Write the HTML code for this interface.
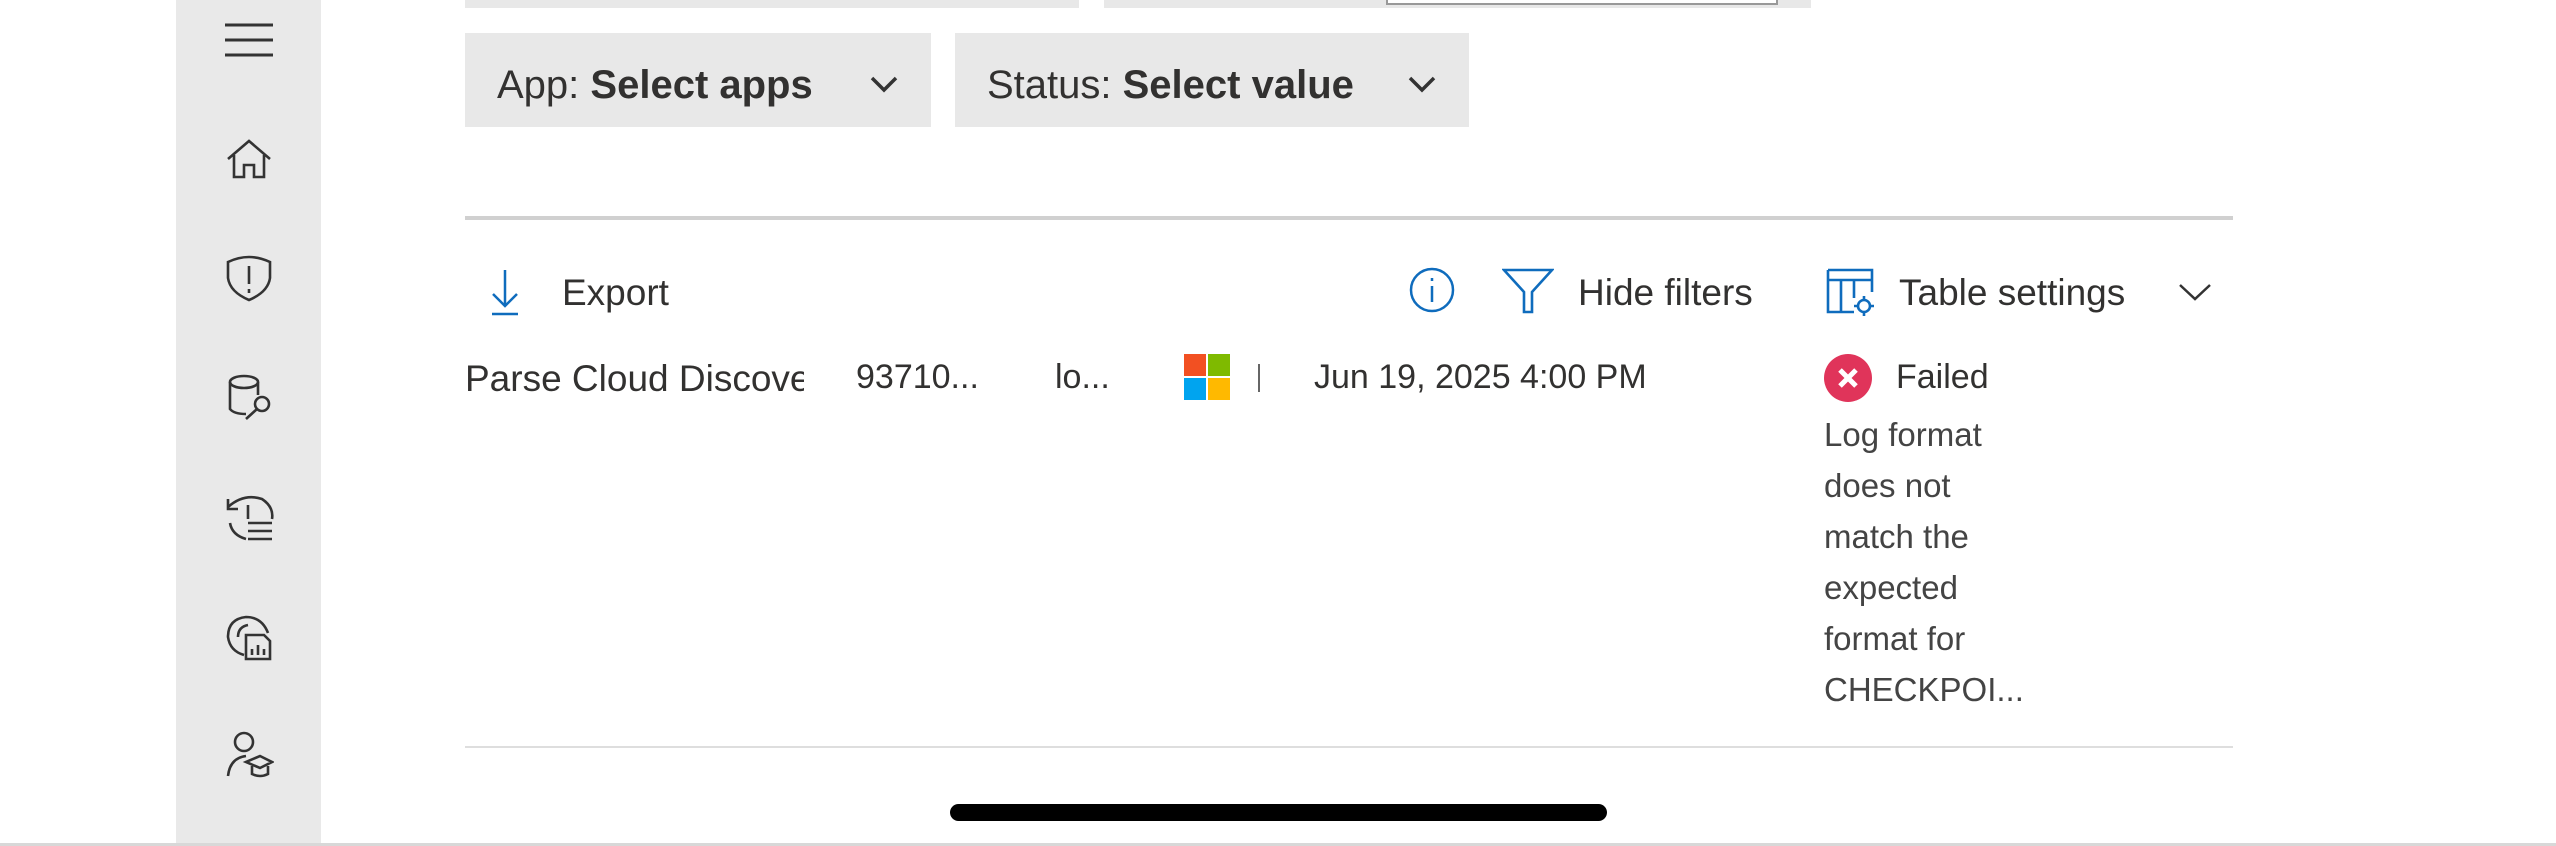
<!DOCTYPE html>
<html><head><meta charset="utf-8"><style>
*{margin:0;padding:0;box-sizing:border-box}
body{width:2556px;height:846px;background:#fff;position:relative;overflow:hidden;font-family:"Liberation Sans",sans-serif;color:#323130}
.a{position:absolute}
.side{left:176px;top:0;width:145px;height:846px;background:#e9e9e9}
.ic{position:absolute;left:224px;width:50px;height:50px}
.dd{background:#e8e8e8;top:33px;height:94px;font-size:40px;line-height:104px;padding-left:32px;white-space:nowrap}
.t{font-size:37px;white-space:nowrap}
.r{font-size:34px;white-space:nowrap}
.d{left:1824px;font-size:33px;color:#444}
</style></head><body>
<div class="a side"></div>
<svg class="ic" style="top:16px" viewBox="0 0 50 50" fill="none" stroke="#333" stroke-width="3"><path d="M1 9H49M1 24H49M1 39H49"/></svg>
<svg class="ic" style="top:133px" viewBox="0 0 50 50" fill="none" stroke="#333" stroke-width="2.6"><path d="M4 26L25 8L46 26M10 22V44H20V32H30V44H40V22"/></svg>
<svg class="ic" style="top:252px" viewBox="0 0 50 50" fill="none" stroke="#333" stroke-width="2.6"><path d="M4 10Q25 0 46 10V26Q44 40 25 48Q6 40 4 26Z"/><path d="M25 14V32M25 37V41"/></svg>
<svg class="ic" style="top:371px" viewBox="0 0 50 50" fill="none" stroke="#333" stroke-width="2.6"><ellipse cx="20" cy="11" rx="14" ry="6"/><path d="M6 11V38Q10 43 22 43M34 11V24"/><circle cx="38" cy="33" r="7"/><path d="M33 38L22 48"/></svg>
<svg class="ic" style="top:493px" viewBox="0 0 50 50" fill="none" stroke="#333" stroke-width="2.6"><path d="M4 14Q20 0 38 6Q50 14 48 26M6 30Q8 42 22 46"/><path d="M4 6V16H14M24 12V26M24 30H48M24 38H48M24 46H48"/></svg>
<svg class="ic" style="top:611px" viewBox="0 0 50 50" fill="none" stroke="#333" stroke-width="2.6"><path d="M44 22Q38 6 22 6Q4 8 4 26Q6 40 20 44M14 26Q14 16 24 14"/><path d="M22 24H40L46 30V48H22Z"/><path d="M28 44V38M34 44V34M40 44V38"/></svg>
<svg class="ic" style="top:730px" viewBox="0 0 50 50" fill="none" stroke="#333" stroke-width="2.6"><circle cx="20" cy="12" r="9"/><path d="M4 46Q6 28 22 26"/><path d="M22 32L36 26L48 32L36 38Z M28 36V44Q36 48 44 44V36"/></svg>

<div class="a" style="left:465px;top:0;width:614px;height:8px;background:#e8e8e8"></div>
<div class="a" style="left:1104px;top:0;width:707px;height:8px;background:#e8e8e8"></div>
<div class="a" style="left:1386px;top:0;width:392px;height:5px;background:#fff;border:2px solid #999;border-top:none"></div>

<div class="a dd" style="left:465px;width:466px">App: <b>Select apps</b></div>
<div class="a dd" style="left:955px;width:514px">Status: <b>Select value</b></div>
<svg class="a" style="left:869px;top:74px" width="30" height="22" viewBox="0 0 30 22" fill="none" stroke="#333" stroke-width="3.5"><path d="M3 4L15 16L27 4"/></svg>
<svg class="a" style="left:1407px;top:74px" width="30" height="22" viewBox="0 0 30 22" fill="none" stroke="#333" stroke-width="3.5"><path d="M3 4L15 16L27 4"/></svg>

<div class="a" style="left:465px;top:216px;width:1768px;height:4px;background:#d0d0d0"></div>

<svg class="a" style="left:490px;top:268px" width="30" height="48" viewBox="0 0 30 48" fill="none" stroke="#0f6cbd" stroke-width="2.5"><path d="M15 2V38M3 26L15 38L27 26M2 46H28"/></svg>
<div class="a t" style="left:562px;top:272px">Export</div>
<svg class="a" style="left:1408px;top:266px" width="48" height="48" viewBox="0 0 48 48" fill="none" stroke="#0f6cbd" stroke-width="2.5"><circle cx="24" cy="24" r="21"/><path d="M24 20V36M24 12V15"/></svg>
<svg class="a" style="left:1502px;top:268px" width="52" height="46" viewBox="0 0 52 46" fill="none" stroke="#0f6cbd" stroke-width="2.6"><path d="M2 2H50L30 24V44H22V24Z"/></svg>
<div class="a t" style="left:1578px;top:272px">Hide filters</div>
<svg class="a" style="left:1826px;top:268px" width="50" height="50" viewBox="0 0 50 50" fill="none" stroke="#0f6cbd" stroke-width="2.6"><path d="M2 2H46V24M2 2V44H28M2 12H46M15 12V44M28 12V30"/><circle cx="38" cy="38" r="6"/><path d="M38 28V31M38 45V48M28 38H31M45 38H48"/></svg>
<div class="a t" style="left:1899px;top:272px">Table settings</div>
<svg class="a" style="left:2178px;top:282px" width="34" height="20" viewBox="0 0 34 20" fill="none" stroke="#333" stroke-width="2.5"><path d="M2 3L17 17L32 3"/></svg>

<div class="a r" style="left:465px;top:358px;width:339px;overflow:hidden;font-size:37px">Parse Cloud Discovery</div>
<div class="a r" style="left:856px;top:358px">93710...</div>
<div class="a r" style="left:1055px;top:358px">lo...</div>
<div class="a" style="left:1184px;top:354px;width:22px;height:22px;background:#f25022"></div>
<div class="a" style="left:1208px;top:354px;width:22px;height:22px;background:#7fba00"></div>
<div class="a" style="left:1184px;top:378px;width:22px;height:22px;background:#00a4ef"></div>
<div class="a" style="left:1208px;top:378px;width:22px;height:22px;background:#ffb900"></div>
<div class="a" style="left:1258px;top:364px;width:2px;height:28px;background:#666"></div>
<div class="a r" style="left:1314px;top:358px">Jun 19, 2025 4:00 PM</div>
<div class="a" style="left:1824px;top:354px;width:48px;height:48px;border-radius:50%;background:#e0345a"></div>
<svg class="a" style="left:1824px;top:354px" width="48" height="48" viewBox="0 0 48 48" stroke="#fff" stroke-width="5"><path d="M16 16L32 32M32 16L16 32"/></svg>
<div class="a r" style="left:1896px;top:358px">Failed</div>
<div class="a d" style="top:416px">Log format</div>
<div class="a d" style="top:467px">does not</div>
<div class="a d" style="top:518px">match the</div>
<div class="a d" style="top:569px">expected</div>
<div class="a d" style="top:620px">format for</div>
<div class="a d" style="top:671px">CHECKPOI...</div>

<div class="a" style="left:465px;top:746px;width:1768px;height:2px;background:#dedede"></div>
<div class="a" style="left:950px;top:804px;width:657px;height:17px;border-radius:9px;background:#000"></div>
<div class="a" style="left:0;top:843px;width:2556px;height:3px;background:#d8d8d8"></div>
</body></html>
